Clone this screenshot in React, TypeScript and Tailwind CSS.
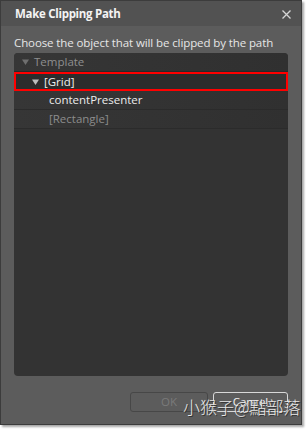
const rows = [
  { label: 'Template', indent: 'pl-[8px]', arrow: true, tone: 'text-[#8f8f8f]', arrowTone: 'text-[#6f6f6f]' },
  { label: '[Grid]', indent: 'pl-[16px]', arrow: true, tone: 'text-[#f0f0f0]', arrowTone: 'text-[#bdbdbd]', selected: true },
  { label: 'contentPresenter', indent: 'pl-[35px]', arrow: false, tone: 'text-[#ececec]' },
  { label: '[Rectangle]', indent: 'pl-[35px]', arrow: false, tone: 'text-[#8c8c8c]' },
];

const Arrow = ({ className }: { className?: string }) => (
  <svg width="7" height="6" viewBox="0 0 7 6" className={className}>
    <path d="M0 0.5 L7 0.5 L3.5 6 Z" fill="currentColor" />
  </svg>
);

export default function App() {
  return (
    <div className="w-[308px] h-[430px] bg-white font-['Open_Sans',sans-serif] relative">
      <div className="w-[302px] h-[425px] bg-[#5c5c5c] border border-[#3c3c3c] shadow-[2px_2px_2px_rgba(0,0,0,0.35)] flex flex-col">
        <div className="h-[25px] bg-[#525252] flex items-center justify-between pl-[14px] pr-[10px]">
          <span className="text-[11.5px] font-bold text-[#f4f4f4] tracking-[-0.3px]">Make Clipping Path</span>
          <svg width="9" height="9" viewBox="0 0 9 9" className="text-[#d6d6d6] mt-[1px]">
            <path d="M0.5 0.5 L8.5 8.5 M8.5 0.5 L0.5 8.5" stroke="currentColor" strokeWidth="1.3" />
          </svg>
        </div>
        <div className="flex-1 flex flex-col px-[13px] pt-[9px] pb-[12px]">
          <p className="text-[11.5px] leading-[16px] text-[#e6e6e6] tracking-[-0.1px]">
            Choose the object that will be clipped by the path
          </p>
          <div className="mt-[2px] h-[323px] bg-[#333333] rounded-[4px] overflow-hidden">
            {rows.map((row) => (
              <div
                key={row.label}
                className={`h-[19px] flex items-center gap-[5px] text-[11.5px] ${row.indent} ${row.tone} ${
                  row.selected
                    ? 'border-2 border-[#ff0000] bg-[#2c2c2c] shadow-[0_2px_3px_rgba(0,0,0,0.5)]'
                    : 'border-b border-[#2b2b2b] bg-gradient-to-r from-[#363636] to-[#303030]'
                }`}
              >
                {row.arrow && <Arrow className={row.arrowTone} />}
                <span>{row.label}</span>
              </div>
            ))}
          </div>
          <div className="mt-auto flex justify-end gap-[5px]">
            <button className="w-[78px] h-[20px] rounded-[3px] border border-[#474747] text-[11.5px] text-[#7a7a7a]">
              OK
            </button>
            <button className="w-[75px] h-[20px] rounded-[3px] border border-[#d8d8d8] text-[11.5px] text-[#f2f2f2]">
              Cancel
            </button>
          </div>
        </div>
      </div>
      <span className="absolute left-[183px] top-[397px] text-[17px] leading-[20px] text-[#e8e8e8] font-['Noto_Sans_CJK_TC',sans-serif] font-light [text-shadow:1px_1px_0_#333]">
        小猴子@點部落
      </span>
    </div>
  );
}
